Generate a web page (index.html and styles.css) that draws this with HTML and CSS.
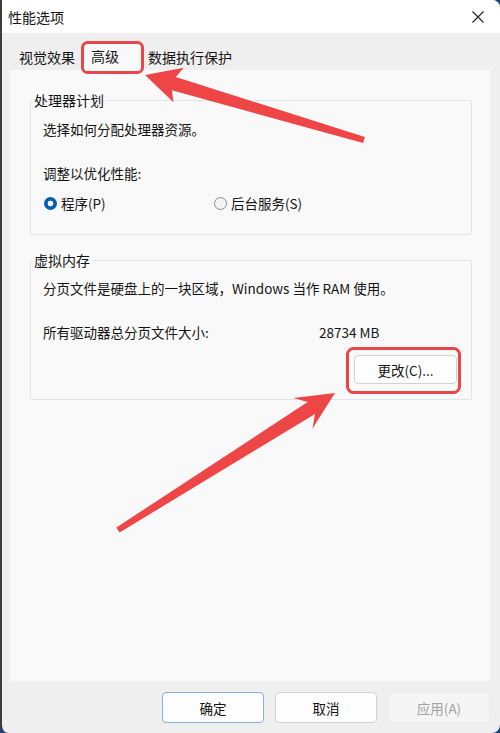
FILE: index.html
```html
<!DOCTYPE html>
<html lang="zh">
<head>
<meta charset="utf-8">
<title>性能选项</title>
<link rel="stylesheet" href="styles.css">
</head>
<body>
<div class="window">
  <div class="titlebar">
    <span class="title">性能选项</span>
    <svg class="close" width="14" height="14" viewBox="0 0 14 14"><path d="M1.5 1.5 L12.5 12.5 M12.5 1.5 L1.5 12.5" stroke="#222" stroke-width="1.1" fill="none"/></svg>
  </div>
  <div class="body">
    <div class="tabs">
      <div class="tab first">视觉效果</div>
      <div class="tab active">高级</div>
      <div class="tab">数据执行保护</div>
    </div>
    <div class="panel">
      <fieldset class="group group-cpu">
        <legend>处理器计划</legend>
        <p class="line">选择如何分配处理器资源。</p>
        <p class="line gap">调整以优化性能:</p>
        <div class="radios">
          <label class="radio"><span class="dot checked"></span>程序(P)</label>
          <label class="radio"><span class="dot"></span>后台服务(S)</label>
        </div>
      </fieldset>
      <fieldset class="group group-mem">
        <legend>虚拟内存</legend>
        <p class="line">分页文件是硬盘上的一块区域，Windows 当作 RAM 使用。</p>
        <div class="line gap size-row"><span>所有驱动器总分页文件大小:</span><span>28734 MB</span></div>
        <div class="btn-row"><button class="btn change">更改(C)...</button></div>
      </fieldset>
    </div>
    <div class="footer">
      <button class="btn primary">确定</button>
      <button class="btn">取消</button>
      <button class="btn disabled">应用(A)</button>
    </div>
  </div>
  <svg class="annot" width="500" height="733" viewBox="0 0 500 733">
    <rect x="82.5" y="42.5" width="60" height="30" rx="5" fill="none" stroke="#e8474a" stroke-width="3"/>
    <rect x="347.5" y="348.5" width="112" height="44" rx="6" fill="none" stroke="#e8474a" stroke-width="3"/>
    <polygon fill="#ee4646" points="145,75 183.7,67.7 175.8,76.9 364.9,137.1 363.1,142.9 171.8,90.3 173.5,102.3"/>
    <polygon fill="#ee4646" points="335,393 312.5,428.5 315,413.9 119.6,532.5 116.4,527.5 307.6,402.1 293.3,398.1"/>
  </svg>
</div>
</body>
</html>
```
FILE: styles.css
```css
html, body {
  margin: 0;
  padding: 0;
}
body {
  width: 500px;
  height: 733px;
  background: #1d3f86;
  font-family: "Noto Sans CJK SC", "Noto Sans", sans-serif;
  font-size: 13.5px;
  color: #141414;
  overflow: hidden;
}
.window {
  position: relative;
  width: 498px;
  height: 733px;
  border-left: 2px solid #3d3d3d;
  border-radius: 0 8px 8px 8px;
  background: #efefef;
  overflow: hidden;
  display: flex;
  flex-direction: column;
}
.titlebar {
  height: 33px;
  background: #ffffff;
  display: flex;
  align-items: center;
  justify-content: space-between;
  padding: 0 15px 0 6px;
  flex: none;
}
.title {
  font-size: 14px;
  line-height: 20px;
}
.close {
  margin-top: 1px;
}
.body {
  flex: 1;
  display: flex;
  flex-direction: column;
  padding: 0 10px 0 8px;
}
.tabs {
  display: flex;
  height: 37px;
  align-items: flex-end;
  padding-left: 2px;
  flex: none;
}
.tab {
  height: 26px;
  line-height: 26px;
  padding: 0 6px 0 6px;
  font-size: 14px;
}
.tab.first {
  padding: 0 9px 0 7px;
}
.tab.active {
  background: #f9f9f9;
  padding: 0 23px 0 7px;
  height: 27px;
}
.panel {
  background: #f9f9f9;
  height: 611px;
  padding: 20px 18px 0 20px;
  box-sizing: border-box;
  flex: none;
}
.group {
  margin: 0;
  border: 1px solid #e4e4e4;
  border-radius: 2px;
  padding: 8px 14px 16px 12px;
}
.group legend {
  padding: 0 2px;
  margin-left: -11px;
  line-height: 20px;
  font-size: 14px;
}
.group-cpu {
  padding-top: 9px;
  padding-bottom: 21px;
}
.group-mem {
  margin-top: 15px;
  padding-top: 8px;
  padding-bottom: 15px;
}
.line {
  margin: 0;
  line-height: 20px;
}
.line.gap {
  margin-top: 24px;
}
.radios {
  display: grid;
  grid-template-columns: 170px 1fr;
  margin-top: 10px;
  line-height: 20px;
}
.radio {
  display: flex;
  align-items: center;
}
.dot {
  width: 11px;
  height: 11px;
  border: 1px solid #8a8a8a;
  border-radius: 50%;
  background: #f4f4f4;
  margin: 0 4px 0 1px;
  flex: none;
}
.dot.checked {
  width: 13px;
  height: 13px;
  border: none;
  background: radial-gradient(circle, #ffffff 0 2.6px, #005fb8 3.2px);
}
.size-row {
  display: grid;
  grid-template-columns: 276px 1fr;
}
.btn-row {
  display: flex;
  justify-content: flex-end;
  margin-top: 13px;
}
.btn {
  font-family: inherit;
  font-size: 13.5px;
  color: #141414;
  background: #fdfdfd;
  border: 1px solid #d2d2d2;
  border-radius: 4px;
  height: 30px;
  padding: 0;
}
.change {
  width: 103px;
  height: 29px;
}
.footer {
  flex: 1;
  display: flex;
  justify-content: flex-end;
  align-items: flex-start;
  gap: 11px;
  padding-top: 11px;
}
.footer .btn {
  width: 102px;
  height: 31px;
}
.footer .primary {
  border-color: #8ab0dc;
}
.footer .disabled {
  background: #f5f5f5;
  border-color: #ececec;
  color: #a2a2a2;
}
.annot {
  position: absolute;
  left: -2px;
  top: 0;
  pointer-events: none;
}
```
